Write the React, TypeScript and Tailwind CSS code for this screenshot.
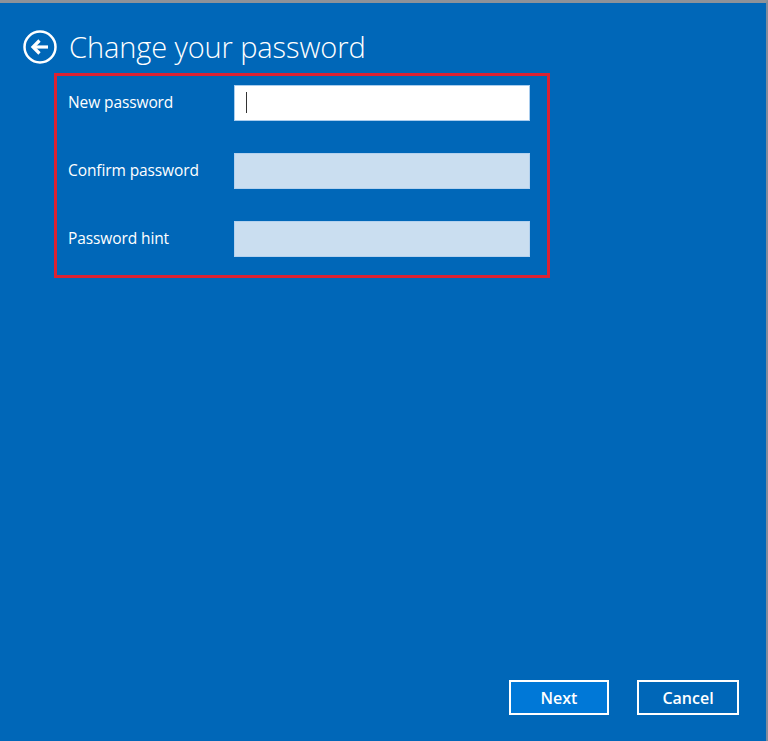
import { useState } from 'react';

const fields = [
  { label: 'New password', active: true },
  { label: 'Confirm password', active: false },
  { label: 'Password hint', active: false },
];

const BackIcon = () => (
  <svg width="34" height="34" viewBox="0 0 34 34" fill="none">
    <circle cx="17" cy="17" r="15.5" stroke="white" strokeWidth="2.5" />
    <path d="M25 17H10.5" stroke="white" strokeWidth="3.2" />
    <path d="M16.5 10.5L10 17l6.5 6.5" stroke="white" strokeWidth="3.2" />
  </svg>
);

export default function App() {
  const [values, setValues] = useState<string[]>(['', '', '']);

  return (
    <div
      className="w-[768px] h-[741px] flex flex-col bg-[#0067b8] border-t-[3px] border-r-2 border-t-[#8d9299] border-r-[#7f8c9c] text-white"
      style={{ fontFamily: '"Open Sans", "Noto Sans", sans-serif' }}
    >
      <div className="flex items-center pl-[23px] pt-[26px] gap-3">
        <BackIcon />
        <h1 className="text-[29px] font-light leading-[36px] tracking-[-0.1px]">Change your password</h1>
      </div>

      <div className="ml-[54px] mt-[8px] w-[496px] border-[3px] border-[#dc2233] pt-[9px] pb-[18px] pl-[11px] pr-[17px] flex flex-col gap-[32px]">
        {fields.map((f, i) => (
          <div key={f.label} className="flex items-center h-[36px]">
            <label className="w-[166px] text-[15.5px] tracking-[-0.1px]">{f.label}</label>
            <div
              className={
                f.active
                  ? 'relative w-[296px] h-[36px] bg-white border border-[#a9cdee]'
                  : 'relative w-[296px] h-[36px] bg-[#cadef0] border border-[#b3d1ee]'
              }
            >
              {f.active && <span className="absolute left-[11px] top-[6px] w-px h-[21px] bg-[#333]" />}
              <input
                type={i < 2 ? 'password' : 'text'}
                value={values[i]}
                onChange={(e) => {
                  const next = [...values];
                  next[i] = e.target.value;
                  setValues(next);
                }}
                className="w-full h-full bg-transparent outline-none px-2 text-black"
              />
            </div>
          </div>
        ))}
      </div>

      <div className="flex-1" />

      <div className="flex justify-end gap-[28px] pr-[27px] pb-[26px]">
        <button className="w-[100px] h-[35px] bg-[#0078d7] border-2 border-white text-[16px] font-semibold">Next</button>
        <button className="w-[102px] h-[35px] border-2 border-white text-[16px] font-semibold">Cancel</button>
      </div>
    </div>
  );
}
